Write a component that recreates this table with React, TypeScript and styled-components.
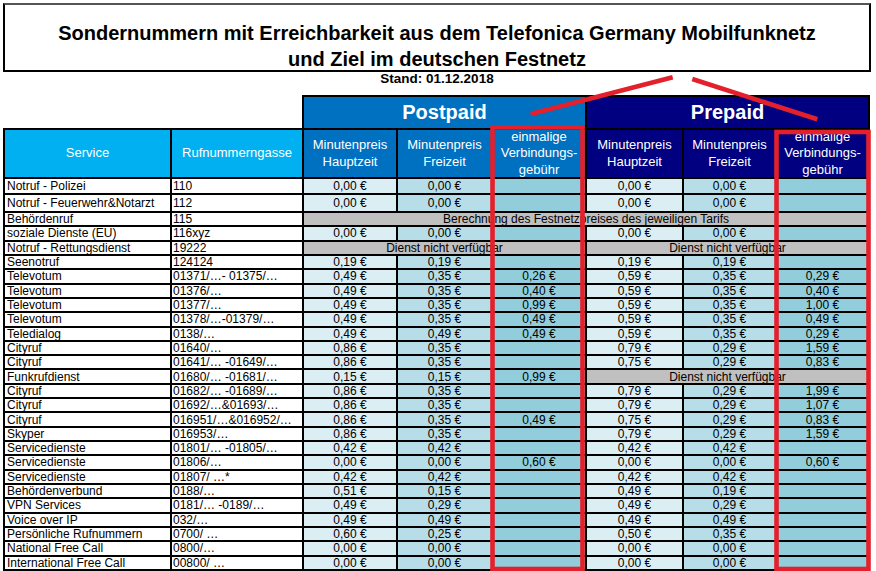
import React from "react";
import styled, { createGlobalStyle } from "styled-components";

const GlobalStyle = createGlobalStyle`
  html, body { margin: 0; padding: 0; background: #fff; }
  body { font-family: "Liberation Sans", Arial, sans-serif; overflow: hidden; }
  * { box-sizing: border-box; }
`;

const Page = styled.div`
  position: relative;
  width: 876px;
  height: 571px;
  overflow: hidden;
  padding: 3px 0 0 3px;
  color: #000;
`;

const TitleBox = styled.div`
  width: 868px;
  height: 69px;
  border: 2px solid #000;
  border-top-color: #555;
  padding-top: 15px;
  text-align: center;
  font-size: 20px;
  font-weight: bold;
  line-height: 26px;
  white-space: nowrap;
`;

const Stand = styled.div`
  width: 868px;
  height: 14px;
  margin-bottom: 9px;
  text-align: center;
  font-size: 13.5px;
  font-weight: bold;
  line-height: 14px;
`;

const GroupRow = styled.div`
  margin-left: 299px;
  width: 568px;
  height: 33px;
  background: #000;
  padding: 2px 2px 0 2px;
  display: grid;
  grid-template-columns: 281px 281px;
  column-gap: 2px;
`;

const GroupCell = styled.div<{ $prepaid?: boolean }>`
  background: ${(p) => (p.$prepaid ? "#000080" : "#0070c0")};
  color: #fff;
  font-size: 20px;
  font-weight: bold;
  display: flex;
  align-items: center;
  justify-content: center;
`;

const Table = styled.div`
  width: 867px;
  background: #000;
  padding: 2px;
  display: grid;
  grid-template-columns: 165px 130px 92px 93px 92px 95px 91px 91px;
  grid-template-rows: 47px 14px 16px repeat(25, 12.32px);
  gap: 2px;
`;

const HeadCell = styled.div<{ $variant: "main" | "post" | "pre" }>`
  background: ${(p) =>
    p.$variant === "main" ? "#00b0f0" : p.$variant === "post" ? "#0070c0" : "#000080"};
  color: #fff;
  font-size: 13px;
  line-height: 16.5px;
  display: flex;
  align-items: center;
  justify-content: center;
  text-align: center;
  overflow: hidden;
`;

const TextCell = styled.div<{ $pad?: number }>`
  background: #fff;
  font-size: 12px;
  line-height: 12px;
  padding-left: ${(p) => p.$pad ?? 2}px;
  display: flex;
  align-items: center;
  white-space: nowrap;
  overflow: hidden;
`;

const tones: Record<string, string> = {
  a: "#dbeef4",
  b: "#b7dde8",
  c: "#92cddc",
};

const PriceCell = styled.div<{ $tone: "a" | "b" | "c" }>`
  background: ${(p) => tones[p.$tone]};
  font-size: 12px;
  line-height: 12px;
  display: flex;
  align-items: center;
  justify-content: center;
  white-space: nowrap;
  overflow: hidden;
`;

const NoteCell = styled.div<{ $span: number }>`
  grid-column: span ${(p) => p.$span};
  background: #c0c0c0;
  font-size: 12px;
  line-height: 12px;
  display: flex;
  align-items: center;
  justify-content: center;
  white-space: nowrap;
  overflow: hidden;
`;

const Overlay = styled.svg`
  position: absolute;
  left: 0;
  top: 0;
  pointer-events: none;
`;

type Row = {
  service: string;
  number: string;
  post: string[] | string | null;
  pre: string[] | string | null;
  both?: string;
};

const NA = "Dienst nicht verfügbar";

const rows: Row[] = [
  { service: "Notruf - Polizei", number: "110", post: ["0,00 €", "0,00 €", ""], pre: ["0,00 €", "0,00 €", ""] },
  { service: "Notruf - Feuerwehr&Notarzt", number: "112", post: ["0,00 €", "0,00 €", ""], pre: ["0,00 €", "0,00 €", ""] },
  { service: "Behördenruf", number: "115", post: null, pre: null, both: "Berechnung des Festnetzpreises des jeweiligen Tarifs" },
  { service: "soziale Dienste (EU)", number: "116xyz", post: ["0,00 €", "0,00 €", ""], pre: ["0,00 €", "0,00 €", ""] },
  { service: "Notruf - Rettungsdienst", number: "19222", post: NA, pre: NA },
  { service: "Seenotruf", number: "124124", post: ["0,19 €", "0,19 €", ""], pre: ["0,19 €", "0,19 €", ""] },
  { service: "Televotum", number: "01371/…- 01375/…", post: ["0,49 €", "0,35 €", "0,26 €"], pre: ["0,59 €", "0,35 €", "0,29 €"] },
  { service: "Televotum", number: "01376/…", post: ["0,49 €", "0,35 €", "0,40 €"], pre: ["0,59 €", "0,35 €", "0,40 €"] },
  { service: "Televotum", number: "01377/…", post: ["0,49 €", "0,35 €", "0,99 €"], pre: ["0,59 €", "0,35 €", "1,00 €"] },
  { service: "Televotum", number: "01378/…-01379/…", post: ["0,49 €", "0,35 €", "0,49 €"], pre: ["0,59 €", "0,35 €", "0,49 €"] },
  { service: "Teledialog", number: "0138/…", post: ["0,49 €", "0,49 €", "0,49 €"], pre: ["0,59 €", "0,35 €", "0,29 €"] },
  { service: "Cityruf", number: "01640/…", post: ["0,86 €", "0,35 €", ""], pre: ["0,79 €", "0,29 €", "1,59 €"] },
  { service: "Cityruf", number: "01641/… -01649/…", post: ["0,86 €", "0,35 €", ""], pre: ["0,75 €", "0,29 €", "0,83 €"] },
  { service: "Funkrufdienst", number: "01680/… -01681/…", post: ["0,15 €", "0,15 €", "0,99 €"], pre: NA },
  { service: "Cityruf", number: "01682/… -01689/…", post: ["0,86 €", "0,35 €", ""], pre: ["0,79 €", "0,29 €", "1,99 €"] },
  { service: "Cityruf", number: "01692/…&01693/…", post: ["0,86 €", "0,35 €", ""], pre: ["0,79 €", "0,29 €", "1,07 €"] },
  { service: "Cityruf", number: "016951/…&016952/…", post: ["0,86 €", "0,35 €", "0,49 €"], pre: ["0,75 €", "0,29 €", "0,83 €"] },
  { service: "Skyper", number: "016953/…", post: ["0,86 €", "0,35 €", ""], pre: ["0,79 €", "0,29 €", "1,59 €"] },
  { service: "Servicedienste", number: "01801/… -01805/…", post: ["0,42 €", "0,42 €", ""], pre: ["0,42 €", "0,42 €", ""] },
  { service: "Servicedienste", number: "01806/…", post: ["0,00 €", "0,00 €", "0,60 €"], pre: ["0,00 €", "0,00 €", "0,60 €"] },
  { service: "Servicedienste", number: "01807/ …*", post: ["0,42 €", "0,42 €", ""], pre: ["0,42 €", "0,42 €", ""] },
  { service: "Behördenverbund", number: "0188/…", post: ["0,51 €", "0,15 €", ""], pre: ["0,49 €", "0,19 €", ""] },
  { service: "VPN Services", number: "0181/… -0189/…", post: ["0,49 €", "0,29 €", ""], pre: ["0,49 €", "0,29 €", ""] },
  { service: "Voice over IP", number: "032/…", post: ["0,49 €", "0,49 €", ""], pre: ["0,49 €", "0,49 €", ""] },
  { service: "Persönliche Rufnummern", number: "0700/ …", post: ["0,60 €", "0,25 €", ""], pre: ["0,50 €", "0,35 €", ""] },
  { service: "National Free Call", number: "0800/…", post: ["0,00 €", "0,00 €", ""], pre: ["0,00 €", "0,00 €", ""] },
  { service: "International Free Call", number: "00800/ …", post: ["0,00 €", "0,00 €", ""], pre: ["0,00 €", "0,00 €", ""] },
];

const toneOrder: ("a" | "b" | "c")[] = ["a", "b", "c"];

function Group({ data, k }: { data: string[] | string; k: string }) {
  if (typeof data === "string") {
    return <NoteCell $span={3}>{data}</NoteCell>;
  }
  return (
    <>
      {data.map((v, i) => (
        <PriceCell key={k + i} $tone={toneOrder[i]}>
          {v}
        </PriceCell>
      ))}
    </>
  );
}

const subHeads = (variant: "post" | "pre") => [
  <HeadCell key={variant + "1"} $variant={variant}>
    Minutenpreis
    <br />
    Hauptzeit
  </HeadCell>,
  <HeadCell key={variant + "2"} $variant={variant}>
    Minutenpreis
    <br />
    Freizeit
  </HeadCell>,
  <HeadCell key={variant + "3"} $variant={variant}>
    einmalige
    <br />
    Verbindungs-
    <br />
    gebühr
  </HeadCell>,
];

export default function App() {
  return (
    <>
      <GlobalStyle />
      <Page>
        <TitleBox>
          Sondernummern mit Erreichbarkeit aus dem Telefonica Germany Mobilfunknetz
          <br />
          und Ziel im deutschen Festnetz
        </TitleBox>
        <Stand>Stand: 01.12.2018</Stand>
        <GroupRow>
          <GroupCell>Postpaid</GroupCell>
          <GroupCell $prepaid>Prepaid</GroupCell>
        </GroupRow>
        <Table>
          <HeadCell $variant="main">Service</HeadCell>
          <HeadCell $variant="main">Rufnummerngasse</HeadCell>
          {subHeads("post")}
          {subHeads("pre")}
          {rows.map((r, i) => (
            <React.Fragment key={i}>
              <TextCell>{r.service}</TextCell>
              <TextCell $pad={1}>{r.number}</TextCell>
              {r.both ? (
                <NoteCell $span={6}>{r.both}</NoteCell>
              ) : (
                <>
                  <Group data={r.post as string[] | string} k={"p" + i} />
                  <Group data={r.pre as string[] | string} k={"q" + i} />
                </>
              )}
            </React.Fragment>
          ))}
        </Table>
        <Overlay width="876" height="571" viewBox="0 0 876 571">
          <g stroke="#e3202b" strokeWidth="4.6" fill="none">
            <rect x="492.5" y="127.5" width="90" height="441.5" />
            <rect x="776.5" y="132" width="92" height="437" />
            <line x1="530.7" y1="114" x2="672.7" y2="77.3" />
            <line x1="692.3" y1="79" x2="817.3" y2="119.3" />
          </g>
        </Overlay>
      </Page>
    </>
  );
}
